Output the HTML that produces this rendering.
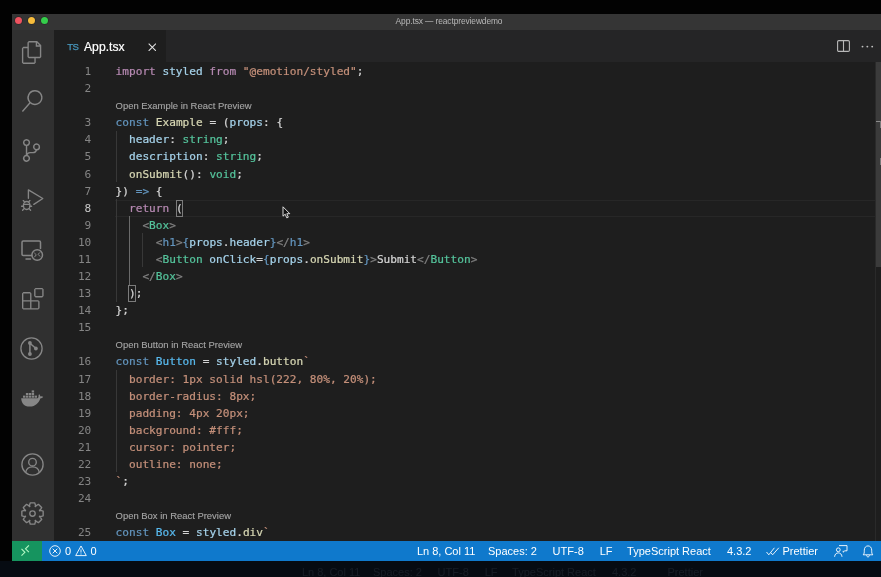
<!DOCTYPE html>
<html><head><meta charset="utf-8"><title>App.tsx — reactpreviewdemo</title>
<style>
*{box-sizing:border-box;margin:0;padding:0}
html,body{width:881px;height:577px;overflow:hidden;background:#020202}
body{position:relative;font-family:"Liberation Sans",sans-serif;-webkit-font-smoothing:antialiased}
#win{position:absolute;left:12px;top:14px;width:869px;height:547px;background:#1e1e1e;overflow:hidden}
#title{will-change:transform;position:absolute;left:0;top:0;width:100%;height:16px;background:#353535}
#title .t{position:absolute;left:0;width:100%;top:2.1px;text-align:center;font-size:8.4px;color:#b8b8b8;letter-spacing:-0.1px;padding-left:5px}
.dot{position:absolute;top:2.85px;width:7.3px;height:7.3px;border-radius:50%;box-shadow:0 0 0 .5px rgba(0,0,0,.35)}
#act{position:absolute;left:0;top:16px;width:42px;height:511px;background:#303030}
#act svg{position:absolute;left:0;overflow:visible}
#tabs{will-change:transform;position:absolute;left:42px;top:16px;right:0;height:32.4px;background:#252526}
#tab{position:absolute;left:0;top:0;width:112px;height:100%;background:#1e1e1e}
#tab .ts{position:absolute;left:13.2px;top:11.1px;font-size:9.6px;color:#4796bc;letter-spacing:-0.6px;-webkit-text-stroke:0.25px}
#tab .nm{position:absolute;left:30px;top:9.5px;font-size:12.1px;color:#fff;letter-spacing:0.05px;-webkit-text-stroke:0.2px}
#ed{filter:blur(0.35px);will-change:transform;position:absolute;left:-12px;top:-14px;width:881px;height:577px;pointer-events:none}
.ln,.cl{margin-top:0.6px;position:absolute;font-family:"DejaVu Sans Mono","Liberation Mono",monospace;font-size:11.146px;line-height:17.08px;height:17.08px;white-space:pre}
.ln{left:53.3px;width:38px;text-align:right;color:#858585}
.ln.cur{color:#c6c6c6}
.cl{left:115.6px;color:#d4d4d4;-webkit-text-stroke:0.22px}
.lens{position:absolute;left:115.6px;font-size:9.45px;line-height:17.08px;height:17.08px;color:#a6a6a6;white-space:pre;padding-top:0.7px;-webkit-text-stroke:0.12px}
.guide{position:absolute;width:1px;background:#383838}
.guide.ga{background:#6a6a6a}
#curline{position:absolute;left:115px;width:760px;top:199.74px;height:17.08px;border-top:1px solid #272727;border-bottom:1px solid #272727}
.brk{position:absolute;border:1px solid #7c7c7c;width:7.6px;height:17px}
#scroll{position:absolute;left:875.5px;top:62.4px;width:6px;height:205px;background:#3b3b3b}
#ruler{position:absolute;left:875px;top:62.4px;width:1px;height:479px;background:#2a2a2a}
#status{will-change:transform;position:absolute;left:0;top:527px;width:100%;height:20px;background:#0f79cc;color:#fff;font-size:11px}
#status .rem{position:absolute;left:0;top:0;width:29.5px;height:100%;background:#16945f}
#status span{position:absolute;top:4.4px;white-space:pre;line-height:13px}
#status svg{position:absolute;overflow:visible}
#refl{position:absolute;left:0;top:561px;width:881px;height:16px;overflow:hidden;background:#060b12}
#refl .in{position:absolute;left:-103px;top:1px;width:881px;height:20px;opacity:.075;color:#cfe4ff;font-size:11px;filter:blur(.6px)}
#refl span{position:absolute;top:4.4px;white-space:pre;line-height:13px}
</style></head><body>
<div id="win">
 <div id="title">
  <div class="dot" style="left:3.15px;background:#ef5360"></div>
  <div class="dot" style="left:15.95px;background:#f8bd3c"></div>
  <div class="dot" style="left:28.85px;background:#35cd4b"></div>
  <div class="t">App.tsx — reactpreviewdemo</div>
 </div>
 <div id="act">
<svg style="left:8.80px;top:10.60px" width="22.10" height="23.00" viewBox="0 0 24 24" preserveAspectRatio="none"><path fill="#868686" d="M17.5 0h-9L7 1.5V6H2.5L1 7.5v15.07L2.5 24h12.07L16 22.57V18h4.7l1.3-1.43V4.5L17.5 0zm0 2.12l2.38 2.38H17.5V2.12zm-3 20.38h-12v-15H7v9.07L8.500 18h6v4.5zm6-6h-12v-15H16V6h4.5v10.5z"/></svg>
<svg style="left:8.80px;top:59.90px" width="22.00" height="22.00" viewBox="0 0 24 24"><path fill="#868686" d="M15.25 0a8.25 8.25 0 0 0-6.18 13.72L1 22.88l1.12 1 8.05-9.12A8.251 8.251 0 1 0 15.250.010V0zm0 15a6.750 6.750 0 1 1 0-13.5 6.750 6.750 0 0 1 0 13.5z"/></svg>
<svg style="left:8.10px;top:109.00px" width="23.00" height="23.00" viewBox="0 0 24 24"><path fill="#868686" d="M21.007 8.222A3.738 3.738 0 0 0 15.045 5.200a3.737 3.737 0 0 0 1.156 6.583 2.988 2.988 0 0 1-2.668 1.670h-2.990a4.456 4.456 0 0 0-2.989 1.165V7.400a3.737 3.737 0 1 0-1.494 0v9.117a3.776 3.776 0 1 0 1.816.099 2.990 2.990 0 0 1 2.668-1.667h2.990a4.484 4.484 0 0 0 4.223-3.039 3.736 3.736 0 0 0 3.250-3.687zM4.565 3.738a2.242 2.242 0 1 1 4.484 0 2.242 2.242 0 0 1-4.484 0zm4.484 16.441a2.242 2.242 0 1 1-4.484 0 2.242 2.242 0 0 1 4.484 0zm8.221-9.715a2.242 2.242 0 1 1 0-4.485 2.242 2.242 0 0 1 0 4.485z"/></svg>
<svg style="left:8.60px;top:158.60px" width="23.00" height="23.00" viewBox="0 0 23 23"><g fill="none" stroke="#868686" stroke-width="1.35" stroke-linejoin="round" stroke-linecap="round">
<path d="M7.400 9.200V0.900L21.800 9.500L12.800 15.400"/>
<ellipse cx="5.700" cy="16.500" rx="3.300" ry="4"/>
<path d="M2.6 15.3H8.6M3.6 12.9L2.3 11.6M7.6 12.9L8.9 11.600M2.500 17.2H0.600M8.700 17.2H10.6M3.100 19.6L1.600 21.2M8.100 19.6L9.600 21.2"/>
</g></svg>
<svg style="left:9.20px;top:210.20px" width="22.50" height="21.50" viewBox="0 0 22.5 21.5"><g fill="none" stroke="#868686" stroke-width="1.500" stroke-linejoin="round" stroke-linecap="round">
<path d="M10.8 15.5H2.200Q1 15.5 1 14.300V2.200Q1 1 2.200 1H18.3Q19.5 1 19.5 2.200V8.5"/>
<path d="M5 19H9.500" stroke-width="1.5"/>
<circle cx="16.2" cy="15" r="5.300"/>
<path d="M13.600 13.200L15.300 14.800L13.600 16.900M18.800 12.600L17.100 14.300L18.800 16.200" stroke-width="1"/>
</g></svg>
<svg style="left:9.60px;top:258.00px" width="21.60" height="21.60" viewBox="0 0 24 24"><path fill="#868686" d="M13.5 1.5L15 0h7.5L24 1.5V9l-1.5 1.5H15L13.5 9V1.5zm1.5 0V9h7.5V1.5H15zM0 15V6l1.5-1.5H9L10.5 6v7.5H18l1.5 1.5v7.5L18 24H1.5L0 22.5V15zm9-1.5V6H1.5v7.5H9zM9 15H1.5v7.5H9V15zm1.500 7.5H18V15h-7.5v7.5z"/></svg>
<svg style="left:8.30px;top:306.90px" width="23.00" height="23.00" viewBox="0 0 23 23"><g fill="none" stroke="#868686" stroke-width="1.300" stroke-linecap="round">
<circle cx="11.500" cy="11.500" r="10.600"/>
<path d="M9.900 6V17M9.900 6.200L15.700 11.300" stroke-width="1.500"/>
<circle cx="9.900" cy="6" r="1.900" fill="#868686" stroke="none"/><circle cx="9.900" cy="17" r="1.900" fill="#868686" stroke="none"/><circle cx="15.900" cy="11.500" r="1.900" fill="#868686" stroke="none"/>
</g></svg>
<svg style="left:8.60px;top:360.00px" width="22.50" height="17.00" viewBox="0 0 22.5 17"><g fill="#868686">
<path d="M0.200 8.200H16.500C17.200 8.100 17.600 7.300 17.500 6.200C17.400 5.300 17.800 4.600 18.300 4.200C19 4.800 19.300 5.600 19.200 6.400C20.200 6 21.300 6.100 22.200 6.700C21.600 7.900 20.500 8.400 19.300 8.400C18 12.500 14.800 16.500 8.500 16.500C3 16.500 0.400 13 0.200 8.200Z"/>
<rect x="2" y="5.600" width="2.400" height="2.100"/><rect x="4.900" y="5.600" width="2.400" height="2.100"/><rect x="7.800" y="5.600" width="2.400" height="2.100"/><rect x="10.700" y="5.600" width="2.400" height="2.100"/><rect x="13.600" y="5.600" width="2.400" height="2.100"/>
<rect x="4.900" y="3" width="2.400" height="2.100"/><rect x="7.800" y="3" width="2.400" height="2.100"/><rect x="10.700" y="3" width="2.400" height="2.100"/>
<rect x="10.700" y="0.400" width="2.400" height="2.100"/>
</g></svg>
<svg style="left:8.60px;top:423.00px" width="23.00" height="23.00" viewBox="0 0 23 23"><g fill="none" stroke="#868686" stroke-width="1.350">
<circle cx="11.5" cy="11.5" r="10.600"/>
<circle cx="11.5" cy="9.200" r="3.800"/>
<path d="M4.700 19.300C5.300 15.800 8 13.800 11.5 13.800S17.700 15.800 18.300 19.300"/>
</g></svg>
<svg style="left:8.90px;top:472.20px" width="23.00" height="23.00" viewBox="0 0 23 23"><g fill="none" stroke="#868686" stroke-width="1.350" stroke-linejoin="round"><path d="M8.22 4.53L9.21 0.84L13.79 0.84L14.78 4.53L14.11 4.26L17.41 2.34L20.66 5.59L18.74 8.89L18.47 8.22L22.16 9.21L22.16 13.79L18.47 14.78L18.74 14.11L20.66 17.41L17.41 20.66L14.11 18.74L14.78 18.47L13.79 22.16L9.21 22.16L8.22 18.47L8.89 18.74L5.59 20.66L2.34 17.41L4.26 14.11L4.53 14.78L0.84 13.79L0.84 9.21L4.53 8.22L4.26 8.89L2.34 5.59L5.59 2.34L8.89 4.26Z"/><circle cx="11.5" cy="11.5" r="2.700"/></g></svg>
 </div>
 <div id="tabs">
  <div id="tab"><span class="ts">TS</span><span class="nm">App.tsx</span>
   <svg style="position:absolute;left:93.6px;top:12.6px" width="8.6" height="8.6" viewBox="0 0 9 9"><path d="M0.7 0.7L8.3 8.3M8.3 0.7L0.7 8.3" stroke="#e6e6e6" stroke-width="1.05" fill="none"/></svg>
  </div>
  <svg style="position:absolute;left:783px;top:10px" width="13" height="12" viewBox="0 0 13 12"><rect x=".6" y=".6" width="11.8" height="10.8" rx="1.2" fill="none" stroke="#b8b8b8" stroke-width="1.1"/><path d="M6.5 .6V11.4" stroke="#b8b8b8" stroke-width="1.1"/></svg>
  <svg style="position:absolute;left:807px;top:14.5px" width="14" height="3" viewBox="0 0 14 3"><circle cx="1.5" cy="1.6" r=".95" fill="#c0c0c0"/><circle cx="6.35" cy="1.6" r=".95" fill="#c0c0c0"/><circle cx="11.2" cy="1.6" r=".95" fill="#c0c0c0"/></svg>
 </div>
 <div id="ed">
  <div id="curline"></div>
<div class="guide" style="left:115.60px;top:130.82px;height:51.24px"></div>
<div class="guide" style="left:115.60px;top:199.14px;height:102.48px"></div>
<div class="guide ga" style="left:129.02px;top:216.22px;height:68.32px"></div>
<div class="guide" style="left:142.44px;top:233.30px;height:34.16px"></div>
<div class="guide" style="left:115.60px;top:369.94px;height:102.48px"></div>
  <div class="brk" style="left:175.8px;top:199.9px"></div>
  <div class="brk" style="left:128.3px;top:285px"></div>
<div class="ln" style="top:62.50px">1</div>
<div class="cl" style="top:62.50px"><span style="color:#b78ab3">import</span><span style="color:#a6d3eb"> styled</span><span style="color:#b78ab3"> from</span><span style="color:#c5907a"> &quot;@emotion/styled&quot;</span><span style="color:#d4d4d4">;</span></div>
<div class="ln" style="top:79.58px">2</div>
<div class="cl" style="top:79.58px"></div>
<div class="lens" style="top:96.66px">Open Example in React Preview</div>
<div class="ln" style="top:113.74px">3</div>
<div class="cl" style="top:113.74px"><span style="color:#6395be">const</span><span style="color:#d6d6b3"> Example</span><span style="color:#d4d4d4"> = (</span><span style="color:#a6d3eb">props</span><span style="color:#d4d4d4">: {</span></div>
<div class="ln" style="top:130.82px">4</div>
<div class="cl" style="top:130.82px"><span style="color:#a6d3eb">  header</span><span style="color:#d4d4d4">: </span><span style="color:#55c49c">string</span><span style="color:#d4d4d4">;</span></div>
<div class="ln" style="top:147.90px">5</div>
<div class="cl" style="top:147.90px"><span style="color:#a6d3eb">  description</span><span style="color:#d4d4d4">: </span><span style="color:#55c49c">string</span><span style="color:#d4d4d4">;</span></div>
<div class="ln" style="top:164.98px">6</div>
<div class="cl" style="top:164.98px"><span style="color:#d6d6b3">  onSubmit</span><span style="color:#d4d4d4">(): </span><span style="color:#55c49c">void</span><span style="color:#d4d4d4">;</span></div>
<div class="ln" style="top:182.06px">7</div>
<div class="cl" style="top:182.06px"><span style="color:#d4d4d4">}) </span><span style="color:#6395be">=&gt;</span><span style="color:#d4d4d4"> {</span></div>
<div class="ln cur" style="top:199.14px">8</div>
<div class="cl" style="top:199.14px"><span style="color:#b78ab3">  return</span><span style="color:#d4d4d4"> (</span></div>
<div class="ln" style="top:216.22px">9</div>
<div class="cl" style="top:216.22px"><span style="color:#808080">    &lt;</span><span style="color:#55c49c">Box</span><span style="color:#808080">&gt;</span></div>
<div class="ln" style="top:233.30px">10</div>
<div class="cl" style="top:233.30px"><span style="color:#808080">      &lt;</span><span style="color:#6395be">h1</span><span style="color:#808080">&gt;</span><span style="color:#6395be">{</span><span style="color:#a6d3eb">props</span><span style="color:#d4d4d4">.</span><span style="color:#a6d3eb">header</span><span style="color:#6395be">}</span><span style="color:#808080">&lt;/</span><span style="color:#6395be">h1</span><span style="color:#808080">&gt;</span></div>
<div class="ln" style="top:250.38px">11</div>
<div class="cl" style="top:250.38px"><span style="color:#808080">      &lt;</span><span style="color:#55c49c">Button</span><span style="color:#a6d3eb"> onClick</span><span style="color:#d4d4d4">=</span><span style="color:#6395be">{</span><span style="color:#a6d3eb">props</span><span style="color:#d4d4d4">.</span><span style="color:#d6d6b3">onSubmit</span><span style="color:#6395be">}</span><span style="color:#808080">&gt;</span><span style="color:#d4d4d4">Submit</span><span style="color:#808080">&lt;/</span><span style="color:#55c49c">Button</span><span style="color:#808080">&gt;</span></div>
<div class="ln" style="top:267.46px">12</div>
<div class="cl" style="top:267.46px"><span style="color:#808080">    &lt;/</span><span style="color:#55c49c">Box</span><span style="color:#808080">&gt;</span></div>
<div class="ln" style="top:284.54px">13</div>
<div class="cl" style="top:284.54px"><span style="color:#d4d4d4">  );</span></div>
<div class="ln" style="top:301.62px">14</div>
<div class="cl" style="top:301.62px"><span style="color:#d4d4d4">};</span></div>
<div class="ln" style="top:318.70px">15</div>
<div class="cl" style="top:318.70px"></div>
<div class="lens" style="top:335.78px">Open Button in React Preview</div>
<div class="ln" style="top:352.86px">16</div>
<div class="cl" style="top:352.86px"><span style="color:#6395be">const</span><span style="color:#58baef"> Button</span><span style="color:#d4d4d4"> = </span><span style="color:#a6d3eb">styled</span><span style="color:#d4d4d4">.</span><span style="color:#d6d6b3">button</span><span style="color:#c5907a">`</span></div>
<div class="ln" style="top:369.94px">17</div>
<div class="cl" style="top:369.94px"><span style="color:#c5907a">  border: 1px solid hsl(222, 80%, 20%);</span></div>
<div class="ln" style="top:387.02px">18</div>
<div class="cl" style="top:387.02px"><span style="color:#c5907a">  border-radius: 8px;</span></div>
<div class="ln" style="top:404.10px">19</div>
<div class="cl" style="top:404.10px"><span style="color:#c5907a">  padding: 4px 20px;</span></div>
<div class="ln" style="top:421.18px">20</div>
<div class="cl" style="top:421.18px"><span style="color:#c5907a">  background: #fff;</span></div>
<div class="ln" style="top:438.26px">21</div>
<div class="cl" style="top:438.26px"><span style="color:#c5907a">  cursor: pointer;</span></div>
<div class="ln" style="top:455.34px">22</div>
<div class="cl" style="top:455.34px"><span style="color:#c5907a">  outline: none;</span></div>
<div class="ln" style="top:472.42px">23</div>
<div class="cl" style="top:472.42px"><span style="color:#c5907a">`</span><span style="color:#d4d4d4">;</span></div>
<div class="ln" style="top:489.50px">24</div>
<div class="cl" style="top:489.50px"></div>
<div class="lens" style="top:506.58px">Open Box in React Preview</div>
<div class="ln" style="top:523.66px">25</div>
<div class="cl" style="top:523.66px"><span style="color:#6395be">const</span><span style="color:#58baef"> Box</span><span style="color:#d4d4d4"> = </span><span style="color:#a6d3eb">styled</span><span style="color:#d4d4d4">.</span><span style="color:#d6d6b3">div</span><span style="color:#c5907a">`</span></div>
  <div id="ruler"></div>
  <div id="scroll"></div>
  <div style="position:absolute;left:875.5px;top:121px;width:6px;height:1.2px;background:#8c8c8c"></div>
  <div style="position:absolute;left:879.6px;top:121px;width:2px;height:7.4px;background:#7a7a7a"></div>
  <div style="position:absolute;left:879.6px;top:158.3px;width:2px;height:7px;background:#7a7a7a"></div>
  <svg style="position:absolute;left:281.5px;top:206px" width="9" height="13" viewBox="0 0 9 13"><path d="M1 .8V10.2L3.2 8.2L4.8 11.9L6.3 11.2L4.8 7.7H7.8Z" fill="#111" stroke="#eee" stroke-width=".9" stroke-linejoin="round"/></svg>
 </div>
 <div id="status">
  <div class="rem"></div>
<svg style="left:9.400px;top:4.300px" width="9" height="11" viewBox="0 0 9 11"><path d="M0.500 3.900L3.900 7.300L0.500 10.700M7.900 0.400L4.500 3.800L7.900 7.200" fill="none" stroke="#b4f7c4" stroke-width="1.100"/></svg>
<svg style="left:37.300px;top:4.300px" width="12" height="12" viewBox="0 0 12 12"><circle cx="6" cy="6" r="5.300" fill="none" stroke="#fff" stroke-width="0.900"/><path d="M3.700 3.700L8.300 8.300M8.300 3.700L3.700 8.300" stroke="#fff" stroke-width="0.900"/></svg>
<svg style="left:62.700px;top:4.200px" width="12" height="11.4" viewBox="0 0 12 11"><path d="M6 0.800L11.300 10.400H0.700Z" fill="none" stroke="#fff" stroke-width="0.900" stroke-linejoin="round"/><path d="M6 4.200V7.400M6 8.300V9.300" stroke="#fff" stroke-width="0.900"/></svg>
<svg style="left:753.500px;top:5.500px" width="14" height="9" viewBox="0 0 14 9"><path d="M0.500 5L2.800 7.800L8.400 0.800M5 5.800L6.600 7.800L12.800 0.800" fill="none" stroke="#fff" stroke-width="0.900"/></svg>
<svg style="left:822px;top:4.200px" width="14" height="13" viewBox="0 0 14 13"><path d="M5 0.600H13V5.800H10.800L9.200 7.200V5.800" fill="none" stroke="#fff" stroke-width="0.900" stroke-linejoin="round"/><circle cx="4.300" cy="4.800" r="1.900" fill="none" stroke="#fff" stroke-width="0.900"/><path d="M0.600 11.800C0.800 9.200 2.300 7.900 4.300 7.900S7.800 9.200 8 11.800" fill="none" stroke="#fff" stroke-width="0.900"/></svg>
<svg style="left:850px;top:4px" width="12" height="13" viewBox="0 0 12 13"><path d="M1.200 9.800C2.300 8.600 2.300 7.600 2.300 5.200C2.300 2.600 3.900 0.900 6 0.900S9.700 2.600 9.700 5.200C9.700 7.600 9.700 8.600 10.800 9.800Z" fill="none" stroke="#fff" stroke-width="0.900" stroke-linejoin="round"/><path d="M4.600 10.200C4.700 11.400 5.300 11.900 6 11.900S7.300 11.400 7.400 10.200" fill="none" stroke="#fff" stroke-width="0.900"/></svg>
<span style="left:53.00px">0</span>
<span style="left:78.40px">0</span>
<span style="left:404.90px">Ln 8, Col 11</span>
<span style="left:476.00px">Spaces: 2</span>
<span style="left:540.60px">UTF-8</span>
<span style="left:587.70px">LF</span>
<span style="left:615.10px">TypeScript React</span>
<span style="left:715.00px">4.3.2</span>
<span style="left:770.50px">Prettier</span>
 </div>
</div>
<div id="refl"><div class="in">
<span style="left:53.00px">0</span>
<span style="left:78.40px">0</span>
<span style="left:404.90px">Ln 8, Col 11</span>
<span style="left:476.00px">Spaces: 2</span>
<span style="left:540.60px">UTF-8</span>
<span style="left:587.70px">LF</span>
<span style="left:615.10px">TypeScript React</span>
<span style="left:715.00px">4.3.2</span>
<span style="left:770.50px">Prettier</span>
</div></div>
</body></html>
